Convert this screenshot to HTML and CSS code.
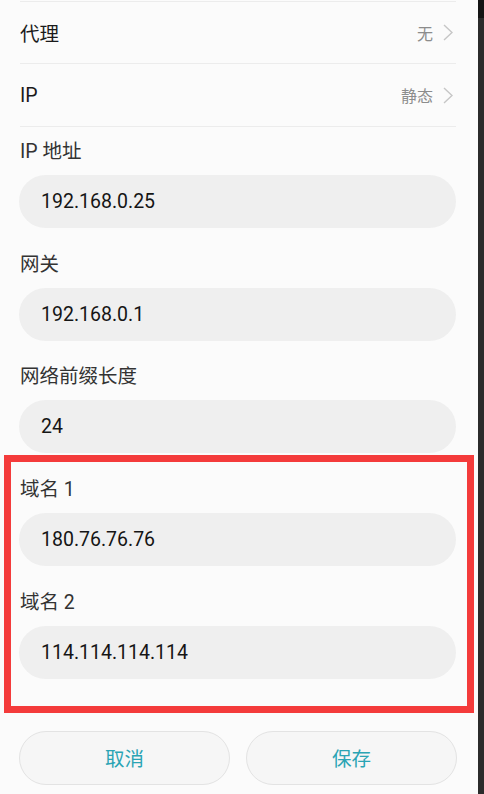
FILE: index.html
```html
<!DOCTYPE html>
<html lang="zh-CN">
<head>
<meta charset="utf-8">
<title>IP 设置</title>
<link rel="stylesheet" href="styles.css">
</head>
<body>
<div class="screen">
  <div class="panel">
    <div class="row row-first">
      <span class="row-title">代理</span>
      <span class="row-value">无<svg class="chev" viewBox="0 0 10 17" width="10" height="17"><path d="M1 1 L9 8.5 L1 16" fill="none" stroke="#c6c6c6" stroke-width="1.4"/></svg></span>
    </div>
    <div class="row row-second">
      <span class="row-title">IP</span>
      <span class="row-value">静态<svg class="chev" viewBox="0 0 10 17" width="10" height="17"><path d="M1 1 L9 8.5 L1 16" fill="none" stroke="#c6c6c6" stroke-width="1.4"/></svg></span>
    </div>

    <div class="field top">
      <div class="label">IP 地址</div>
      <div class="input">192.168.0.25</div>
    </div>
    <div class="field">
      <div class="label">网关</div>
      <div class="input">192.168.0.1</div>
    </div>
    <div class="field">
      <div class="label">网络前缀长度</div>
      <div class="input">24</div>
    </div>

    <div class="highlight">
      <div class="field first">
        <div class="label">域名 1</div>
        <div class="input">180.76.76.76</div>
      </div>
      <div class="field">
        <div class="label">域名 2</div>
        <div class="input">114.114.114.114</div>
      </div>
    </div>

    <div class="buttons">
      <div class="btn">取消</div>
      <div class="btn">保存</div>
    </div>
  </div>
  <div class="edge"><div class="edge-top"></div></div>
</div>
</body>
</html>
```
FILE: styles.css
```css
html, body {
  margin: 0;
  padding: 0;
}
body {
  width: 484px;
  height: 794px;
  overflow: hidden;
  font-family: Roboto, "Noto Sans CJK SC", sans-serif;
  background: #2b2b2b;
}
.screen {
  display: flex;
  height: 794px;
}
.panel {
  width: 478px;
  flex: none;
  background: #fbfbfb;
  padding: 1px 22px 0 19px;
  box-sizing: border-box;
}
.edge {
  flex: 1;
  background: #2b2b2b;
}
.edge-top {
  height: 18px;
  background: #141414;
}
.row {
  display: flex;
  align-items: center;
  justify-content: space-between;
  border-top: 1px solid #ececec;
  margin-left: 1px;
}
.row-first {
  height: 61px;
}
.row-second {
  height: 62px;
  border-bottom: 1px solid #ececec;
}
.row-title {
  font-size: 19.5px;
  color: #1a1a1a;
}
.row-value {
  display: flex;
  align-items: center;
  gap: 10px;
  font-size: 16px;
  color: #8c8c8c;
  margin-right: 3px;
}
.chev {
  display: block;
}
.field {
  padding-top: 13.5px;
}
.field.top {
  padding-top: 2px;
}
.field.first {
  padding-top: 0;
}
.label {
  height: 46px;
  line-height: 46px;
  font-size: 19.5px;
  color: #333;
  padding-left: 1px;
}
.input {
  height: 53px;
  border-radius: 27px;
  background: #efefef;
  display: flex;
  align-items: center;
  padding-left: 22px;
  font-size: 19.5px;
  color: #151515;
}
.highlight {
  margin: 2px -18px 0 -15px;
  border: 7px solid #f43b3b;
  padding: 5px 11px 27px 8px;
  background: #fbfbfb;
}
.buttons {
  display: flex;
  gap: 16px;
  margin-top: 18px;
  margin-right: -1px;
}
.btn {
  flex: 1;
  height: 54px;
  box-sizing: border-box;
  border: 1px solid #e3e3e3;
  border-radius: 27px;
  background: #f6f6f6;
  display: flex;
  align-items: center;
  justify-content: center;
  font-size: 19.5px;
  color: #2aa4b4;
}
```
